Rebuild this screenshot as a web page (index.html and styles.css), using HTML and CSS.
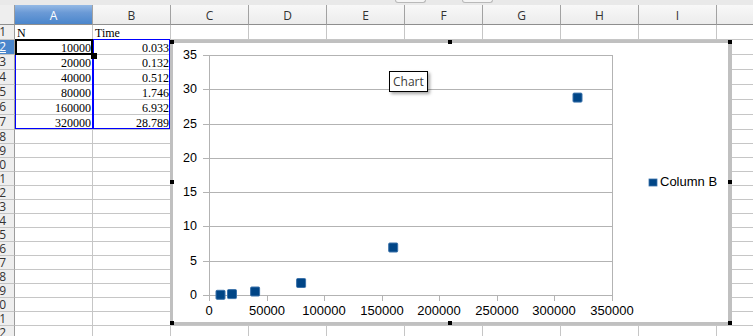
FILE: index.html
```html
<!DOCTYPE html>
<html lang="en">
<head>
    <meta charset="UTF-8">
    <title>Sheet - Chart</title>
    <link rel="stylesheet" href="styles.css">
</head>
<body>
<div class="page">
    <div class="topbar"><span class="tab"></span><span class="tab"></span></div>

    <div class="sheet">
        <div class="corner"></div>
        <div class="ch sel">A</div><div class="ch">B</div><div class="ch">C</div><div class="ch">D</div><div class="ch">E</div>
        <div class="ch">F</div><div class="ch">G</div><div class="ch">H</div><div class="ch">I</div><div class="ch"></div>

        <div class="rh">1</div><div class="c">N</div><div class="c">Time</div><div></div><div></div><div></div><div></div><div></div><div></div><div></div><div></div>
        <div class="rh sel"><u>2</u></div><div class="c num">10000</div><div class="c num">0.033</div><div></div><div></div><div></div><div></div><div></div><div></div><div></div><div></div>
        <div class="rh">3</div><div class="c num">20000</div><div class="c num">0.132</div><div></div><div></div><div></div><div></div><div></div><div></div><div></div><div></div>
        <div class="rh">4</div><div class="c num">40000</div><div class="c num">0.512</div><div></div><div></div><div></div><div></div><div></div><div></div><div></div><div></div>
        <div class="rh">5</div><div class="c num">80000</div><div class="c num">1.746</div><div></div><div></div><div></div><div></div><div></div><div></div><div></div><div></div>
        <div class="rh">6</div><div class="c num">160000</div><div class="c num">6.932</div><div></div><div></div><div></div><div></div><div></div><div></div><div></div><div></div>
        <div class="rh">7</div><div class="c num">320000</div><div class="c num">28.789</div><div></div><div></div><div></div><div></div><div></div><div></div><div></div><div></div>
        <div class="rh">8</div><div></div><div></div><div></div><div></div><div></div><div></div><div></div><div></div><div></div><div></div>
        <div class="rh">9</div><div></div><div></div><div></div><div></div><div></div><div></div><div></div><div></div><div></div><div></div>
        <div class="rh">10</div><div></div><div></div><div></div><div></div><div></div><div></div><div></div><div></div><div></div><div></div>
        <div class="rh">11</div><div></div><div></div><div></div><div></div><div></div><div></div><div></div><div></div><div></div><div></div>
        <div class="rh">12</div><div></div><div></div><div></div><div></div><div></div><div></div><div></div><div></div><div></div><div></div>
        <div class="rh">13</div><div></div><div></div><div></div><div></div><div></div><div></div><div></div><div></div><div></div><div></div>
        <div class="rh">14</div><div></div><div></div><div></div><div></div><div></div><div></div><div></div><div></div><div></div><div></div>
        <div class="rh">15</div><div></div><div></div><div></div><div></div><div></div><div></div><div></div><div></div><div></div><div></div>
        <div class="rh">16</div><div></div><div></div><div></div><div></div><div></div><div></div><div></div><div></div><div></div><div></div>
        <div class="rh">17</div><div></div><div></div><div></div><div></div><div></div><div></div><div></div><div></div><div></div><div></div>
        <div class="rh">18</div><div></div><div></div><div></div><div></div><div></div><div></div><div></div><div></div><div></div><div></div>
        <div class="rh">19</div><div></div><div></div><div></div><div></div><div></div><div></div><div></div><div></div><div></div><div></div>
        <div class="rh">20</div><div></div><div></div><div></div><div></div><div></div><div></div><div></div><div></div><div></div><div></div>
        <div class="rh">21</div><div></div><div></div><div></div><div></div><div></div><div></div><div></div><div></div><div></div><div></div>
        <div class="rh">22</div><div></div><div></div><div></div><div></div><div></div><div></div><div></div><div></div><div></div><div></div>
    </div>

    <!-- selection overlays -->
    <div class="range range-a"></div>
    <div class="range range-b"></div>
    <div class="cursor"><span class="fill-handle"></span></div>

    <!-- chart object -->
    <div class="chart">
        <svg class="plot" width="555" height="279" viewBox="0 0 555 279">
            <g class="grid">
                <line x1="30" y1="12.5" x2="439" y2="12.5"/>
                <line x1="30" y1="46.5" x2="439" y2="46.5"/>
                <line x1="30" y1="81.5" x2="439" y2="81.5"/>
                <line x1="30" y1="115.5" x2="439" y2="115.5"/>
                <line x1="30" y1="149.5" x2="439" y2="149.5"/>
                <line x1="30" y1="183.5" x2="439" y2="183.5"/>
                <line x1="30" y1="218.5" x2="439" y2="218.5"/>
                <line x1="30" y1="252.5" x2="439.5" y2="252.5"/>
                <line x1="36.5" y1="12" x2="36.5" y2="258"/>
                <line x1="439.5" y1="12" x2="439.5" y2="258"/>
                <line x1="94.5" y1="252" x2="94.5" y2="258"/>
                <line x1="151.5" y1="252" x2="151.5" y2="258"/>
                <line x1="209.5" y1="252" x2="209.5" y2="258"/>
                <line x1="266.5" y1="252" x2="266.5" y2="258"/>
                <line x1="324.5" y1="252" x2="324.5" y2="258"/>
                <line x1="381.5" y1="252" x2="381.5" y2="258"/>
            </g>
            <g class="ylabels">
                <text x="24" y="16">35</text>
                <text x="24" y="50">30</text>
                <text x="24" y="85">25</text>
                <text x="24" y="119">20</text>
                <text x="24" y="153">15</text>
                <text x="24" y="187">10</text>
                <text x="24" y="222">5</text>
                <text x="24" y="256">0</text>
            </g>
            <g class="xlabels">
                <text x="36" y="272">0</text>
                <text x="94" y="272">50000</text>
                <text x="151" y="272">100000</text>
                <text x="209" y="272">150000</text>
                <text x="266" y="272">200000</text>
                <text x="324" y="272">250000</text>
                <text x="381" y="272">300000</text>
                <text x="439" y="272">350000</text>
            </g>
            <g class="points">
                <rect x="43" y="247.3" width="9" height="9"/>
                <rect x="54.5" y="246.6" width="9" height="9"/>
                <rect x="77.6" y="244" width="9" height="9"/>
                <rect x="123.6" y="235.5" width="9" height="9"/>
                <rect x="215.7" y="200" width="9" height="9"/>
                <rect x="400" y="50.1" width="9" height="9"/>
            </g>
            <rect class="legend-key" x="476" y="136" width="8" height="7"/>
            <text class="legend" x="487" y="143">Column B</text>
        </svg>
        <span class="handle h-tl"></span>
        <span class="handle h-tm"></span>
        <span class="handle h-tr"></span>
        <span class="handle h-ml"></span>
        <span class="handle h-mr"></span>
        <span class="handle h-bl"></span>
        <span class="handle h-bm"></span>
        <span class="handle h-br"></span>
    </div>

    <div class="tip">Chart</div>
</div>
</body>
</html>
```

FILE: styles.css
```css
body {
    margin: 0;
    background-color: #ffffff;
    overflow: hidden;
    font-family: "Liberation Serif", serif;
}
.page {
    position: relative;
    width: 753px;
    height: 336px;
    overflow: hidden;
}
.topbar {
    height: 5px;
    background-color: #e9e9e9;
    display: flex;
    align-items: flex-start;
    padding-left: 395px;
    gap: 36px;
}
.tab {
    width: 29px;
    height: 2px;
    background-color: #f5f5f5;
    border: 1px solid #b9b9b9;
    border-top: none;
    border-radius: 0 0 4px 4px;
}
.sheet {
    display: grid;
    grid-template-columns: 15px repeat(10, 78px);
    grid-template-rows: 20px repeat(7, 15px) repeat(15, 14px);
}
.sheet > div {
    box-sizing: border-box;
    border-right: 1px solid #c6c6c6;
    border-bottom: 1px solid #c6c6c6;
}
.sheet > .corner {
    background-color: #eeeeee;
    border-right: 1px solid #9c9c9c;
    border-bottom: 1px solid #8e8e8e;
}
.sheet > .ch {
    background: linear-gradient(#f8f8f8, #ececec);
    border-right: 1px solid #a2a2a2;
    border-bottom: 1px solid #8e8e8e;
    font-family: "Open Sans", sans-serif;
    font-size: 12px;
    color: #333333;
    display: flex;
    align-items: center;
    justify-content: center;
    padding-top: 1px;
}
.sheet > .ch.sel {
    background: linear-gradient(#94b9e5, #6b9ad6 40%, #4a86cc);
    color: #ffffff;
}
.sheet > .rh {
    background-color: #eeeeee;
    border-right: 1px solid #9c9c9c;
    border-bottom: 1px solid #c4c4c4;
    font-family: "Open Sans", sans-serif;
    font-size: 12px;
    line-height: 12px;
    color: #333333;
    display: flex;
    align-items: center;
    justify-content: flex-end;
    padding-right: 8px;
    overflow: hidden;
    white-space: nowrap;
}
.sheet > .rh.sel {
    background-color: #4a86cc;
    color: #ffffff;
}
.sheet > .c {
    font-size: 12px;
    line-height: 12px;
    color: #000000;
    display: flex;
    align-items: flex-end;
    padding: 0 1px 0 2px;
    white-space: nowrap;
}
.sheet > .num {
    justify-content: flex-end;
}

/* selection */
.range {
    position: absolute;
    top: 39px;
    height: 90px;
    box-sizing: border-box;
    border: 1px solid #0000ff;
}
.range-a {
    left: 15px;
    width: 78px;
}
.range-b {
    left: 93px;
    width: 77px;
}
.cursor {
    position: absolute;
    left: 15px;
    top: 39px;
    width: 78px;
    height: 16px;
    box-sizing: border-box;
    border: 2px solid #000000;
}
.fill-handle {
    position: absolute;
    right: -6px;
    bottom: -6px;
    width: 6px;
    height: 6px;
    background-color: #000000;
}

/* chart */
.chart {
    position: absolute;
    left: 170px;
    top: 40px;
    width: 562px;
    height: 285px;
    box-sizing: border-box;
    border: 3px solid #c0c0c0;
    border-right-width: 4px;
    background-color: #ffffff;
}
.plot {
    display: block;
    font-family: "Liberation Sans", Arial, sans-serif;
}
.grid line {
    stroke: #b3b3b3;
    stroke-width: 1;
}
.ylabels text {
    font-size: 12.5px;
    text-anchor: end;
    fill: #000000;
}
.xlabels text {
    font-size: 13px;
    text-anchor: middle;
    fill: #000000;
}
.points rect {
    fill: #004586;
    stroke: #3b72ab;
    stroke-width: 1;
    rx: 1;
}
.legend-key {
    fill: #004586;
    stroke: #3b72ab;
    stroke-width: 0.8;
}
.legend {
    font-size: 13px;
    fill: #000000;
}
.handle {
    position: absolute;
    width: 4px;
    height: 4px;
    background-color: #000000;
}
.h-tl { left: -3px; top: -3px; }
.h-tm { left: 275px; top: -3px; }
.h-tr { right: -4px; top: -3px; }
.h-ml { left: -3px; top: 137px; }
.h-mr { right: -4px; top: 137px; }
.h-bl { left: -3px; bottom: -3px; }
.h-bm { left: 275px; bottom: -3px; }
.h-br { right: -4px; bottom: -3px; }

.tip {
    position: absolute;
    left: 389px;
    top: 71px;
    height: 21px;
    box-sizing: border-box;
    padding: 0 3px;
    border: 1px solid #000000;
    background-color: #ffffff;
    box-shadow: 2px 2px 3px rgba(0, 0, 0, 0.35);
    font-family: "Open Sans", sans-serif;
    font-size: 12px;
    line-height: 19px;
    color: #3a3a3a;
}
```
